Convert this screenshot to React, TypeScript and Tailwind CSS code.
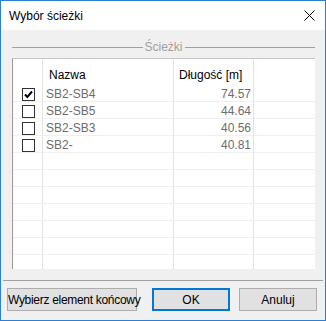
import React from "react";

const rows = [
  { name: "SB2-SB4", len: "74.57", checked: true },
  { name: "SB2-SB5", len: "44.64", checked: false },
  { name: "SB2-SB3", len: "40.56", checked: false },
  { name: "SB2-", len: "40.81", checked: false },
];

function Checkbox({ checked }: { checked: boolean }) {
  return (
    <div className="w-[13px] h-[13px] border border-[#333333] bg-white flex items-center justify-center">
      {checked && (
        <svg width="11" height="11" viewBox="0 0 11 11">
          <path d="M2 5.5 L4.3 8 L9 2.5" fill="none" stroke="#000" strokeWidth="2" />
        </svg>
      )}
    </div>
  );
}

export default function App() {
  const empty = Array.from({ length: 7 });
  return (
    <div
      className="w-[326px] h-[321px] border border-[#2b7fd4] bg-[#f0f0f0] flex flex-col overflow-hidden"
      style={{ fontFamily: '"Liberation Sans", Arial, sans-serif' }}
    >
      <div className="h-[29px] bg-white flex items-center justify-between pl-[8px] pr-[10px] shrink-0">
        <span className="text-[12px] text-black">Wybór ścieżki</span>
        <svg width="11" height="11" viewBox="0 0 11 11">
          <path d="M0.5 0.5 L10.5 10.5 M10.5 0.5 L0.5 10.5" stroke="#000" strokeWidth="1" />
        </svg>
      </div>
      <div className="flex-1 flex flex-col">
        <div className="pl-[11px] pr-[10px] pt-[9px]">
          <div className="h-[16px] flex items-center">
            <div className="flex-1 h-px bg-[#a0a0a0]" />
            <span className="px-[2px] text-[12px] text-[#a0a0a0] leading-none">Ścieżki</span>
            <div className="flex-1 h-px bg-[#a0a0a0]" />
          </div>
          <div className="mt-[3px] h-[211px] bg-white border-l border-t border-l-[#a5978b] border-t-[#c8c8c8] overflow-hidden text-[12px]">
            <div className="grid grid-cols-[30px_131px_80px_1fr] h-[26px]">
              <div className="border-r border-[#e3e3e3]" />
              <div className="border-r border-[#e3e3e3] pl-[6px] pt-[7px] text-black">Nazwa</div>
              <div className="border-r border-[#e3e3e3] pl-[5px] pt-[7px] text-black">Długość [m]</div>
              <div />
            </div>
            {rows.map((r) => (
              <div key={r.name} className="grid grid-cols-[30px_131px_80px_1fr] h-[17px] border-b border-[#f0f0f0]">
                <div className="border-r border-[#e3e3e3] pl-[9px] flex items-center">
                  <Checkbox checked={r.checked} />
                </div>
                <div className="border-r border-[#e3e3e3] pl-[3px] flex items-center text-[#6d6d6d]">{r.name}</div>
                <div className="border-r border-[#e3e3e3] pr-[2px] flex items-center justify-end text-[#6d6d6d]">{r.len}</div>
                <div />
              </div>
            ))}
            {empty.map((_, i) => (
              <div key={i} className="grid grid-cols-[30px_131px_80px_1fr] h-[17px] border-b border-[#f0f0f0]">
                <div className="border-r border-[#e3e3e3]" />
                <div className="border-r border-[#e3e3e3]" />
                <div className="border-r border-[#e3e3e3]" />
                <div />
              </div>
            ))}
          </div>
        </div>
        <div className="mx-[2px] mt-[11px] h-px bg-[#a0a0a0]" />
        <div className="flex pl-[6px] mt-[7px] text-[12px]">
          <button className="w-[130px] h-[23px] bg-[#e1e1e1] border border-[#adadad] text-black whitespace-nowrap tracking-[-0.3px] px-0">
            Wybierz element końcowy
          </button>
          <button className="ml-[15px] w-[78px] h-[23px] bg-[#e1e1e1] border-2 border-[#0078d7] text-black">
            OK
          </button>
          <button className="ml-[9px] w-[78px] h-[23px] bg-[#e1e1e1] border border-[#adadad] text-black">
            Anuluj
          </button>
        </div>
      </div>
    </div>
  );
}
